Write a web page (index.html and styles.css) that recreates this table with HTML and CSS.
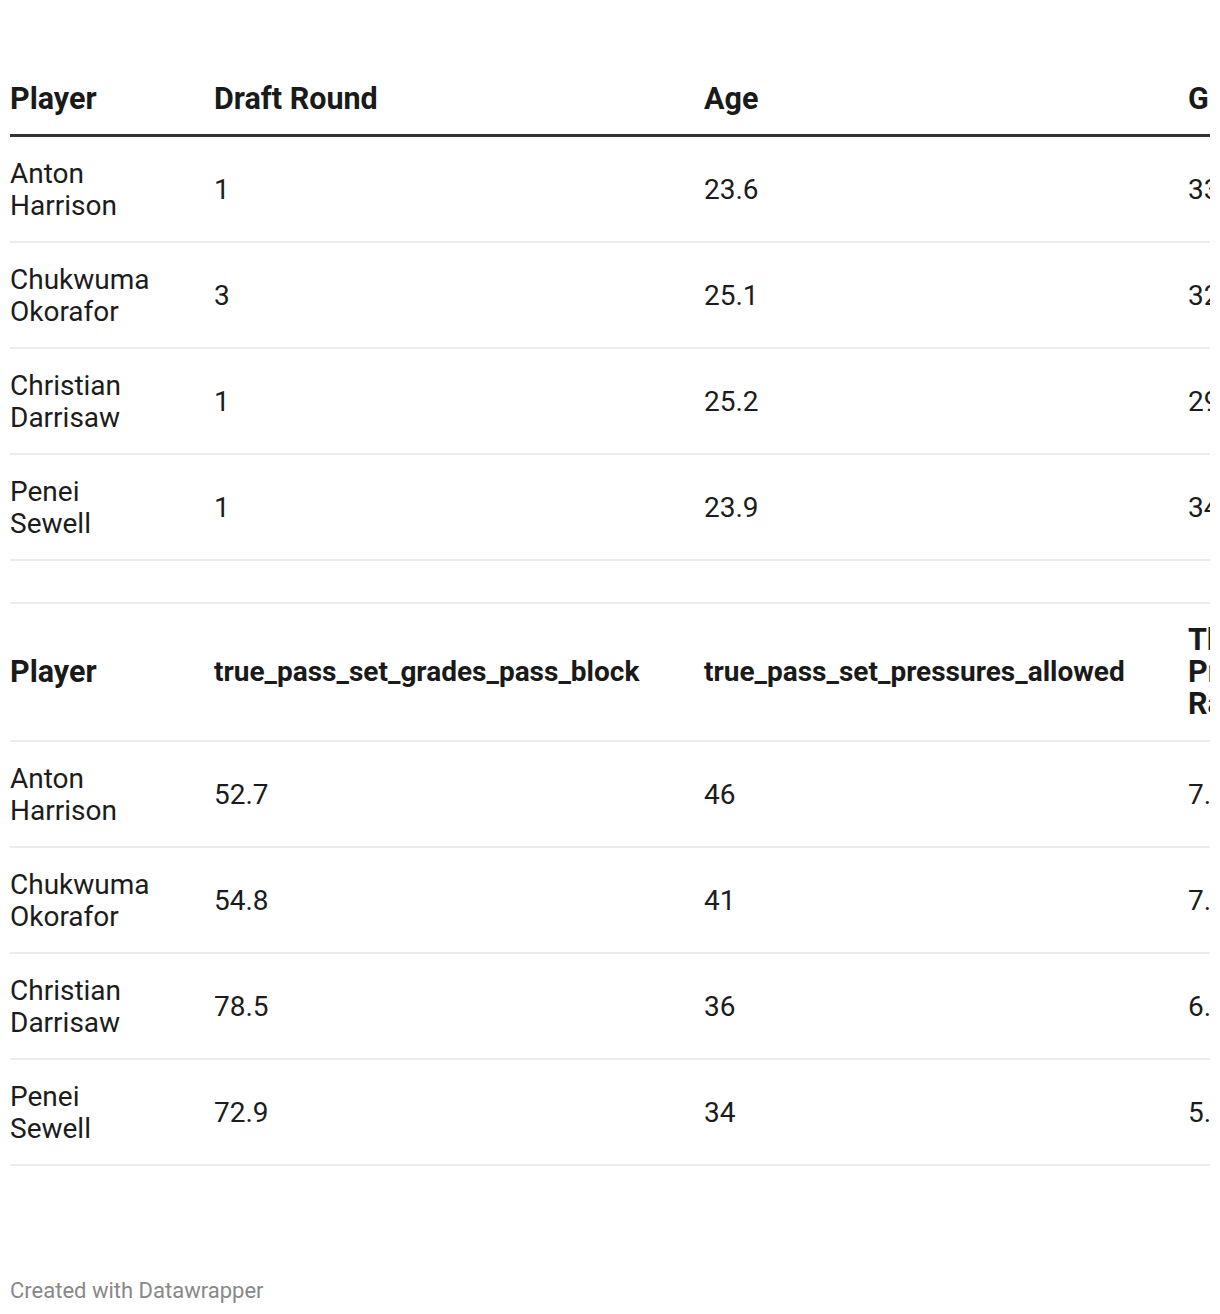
FILE: index.html
```html
<!DOCTYPE html>
<html lang="en">
<head>
<meta charset="utf-8">
<title>Tackles comparison</title>
<link rel="stylesheet" href="styles.css">
</head>
<body>
<div class="chart">
  <div class="clip">
    <table class="dw-table first">
      <colgroup><col class="c1"><col class="c2"><col class="c3"><col class="c4"></colgroup>
      <thead>
        <tr><th>Player</th><th>Draft Round</th><th>Age</th><th>GP</th></tr>
      </thead>
      <tbody>
        <tr><td>Anton Harrison</td><td>1</td><td>23.6</td><td>33</td></tr>
        <tr><td>Chukwuma Okorafor</td><td>3</td><td>25.1</td><td>32</td></tr>
        <tr><td>Christian Darrisaw</td><td>1</td><td>25.2</td><td>29</td></tr>
        <tr><td>Penei Sewell</td><td>1</td><td>23.9</td><td>34</td></tr>
      </tbody>
    </table>
    <table class="dw-table second">
      <colgroup><col class="c1"><col class="c2"><col class="c3"><col class="c4"></colgroup>
      <thead>
        <tr><th>Player</th><th class="key">true_pass_set_grades_pass_block</th><th class="key">true_pass_set_pressures_allowed</th><th>The Pressure Rate</th></tr>
      </thead>
      <tbody>
        <tr><td>Anton Harrison</td><td>52.7</td><td>46</td><td>7.4</td></tr>
        <tr><td>Chukwuma Okorafor</td><td>54.8</td><td>41</td><td>7.1</td></tr>
        <tr><td>Christian Darrisaw</td><td>78.5</td><td>36</td><td>6.3</td></tr>
        <tr><td>Penei Sewell</td><td>72.9</td><td>34</td><td>5.8</td></tr>
      </tbody>
    </table>
  </div>
  <p class="credit">Created with Datawrapper</p>
</div>
</body>
</html>
```
FILE: styles.css
```css
html, body {
  margin: 0;
  padding: 0;
  background: #ffffff;
}

body {
  font-family: Roboto, "Liberation Sans", Arial, sans-serif;
  color: #1a1a1a;
}

.chart {
  padding: 63px 10px 0 10px;
}

.clip {
  width: 1200px;
  overflow: hidden;
}

.dw-table {
  width: 1338px;
  table-layout: fixed;
  border-collapse: separate;
  border-spacing: 0;
}

.dw-table col.c1 { width: 204px; }
.dw-table col.c2 { width: 490px; }
.dw-table col.c3 { width: 484px; }
.dw-table col.c4 { width: 160px; }

.dw-table th,
.dw-table td {
  text-align: left;
  vertical-align: middle;
  padding: 21px 24px 19px 0;
  white-space: normal;
}

.dw-table th {
  font-size: 30.5px;
  line-height: 32px;
  font-weight: 700;
  color: #1a1a1a;
}

.dw-table th.key {
  font-size: 28px;
}

.dw-table td {
  font-size: 28px;
  line-height: 32px;
  font-weight: 400;
  color: #1c1c1c;
  border-bottom: 2px solid #ececec;
}

.dw-table th:first-child,
.dw-table td:first-child {
  padding-right: 56px;
}

.first th {
  padding-top: 20px;
  padding-bottom: 19px;
  border-bottom: 3px solid #333333;
}

.second {
  margin-top: 41px;
}

.second th {
  padding-top: 20px;
  padding-bottom: 20px;
  border-top: 2px solid #ececec;
  border-bottom: 2px solid #ececec;
}

.credit {
  margin: 112px 0 0 0;
  font-size: 22px;
  line-height: 26px;
  color: #888888;
}
```
